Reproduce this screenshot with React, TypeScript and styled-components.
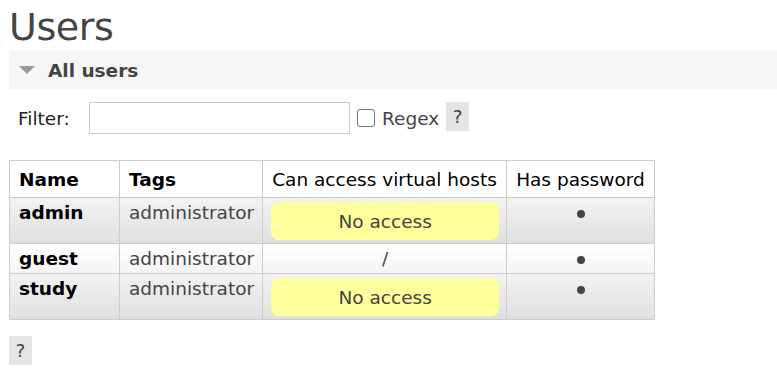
import styled, { createGlobalStyle } from "styled-components";

const GlobalStyle = createGlobalStyle`
  html, body {
    margin: 0;
    padding: 0;
    background: #fff;
    font-family: "DejaVu Sans", Verdana, sans-serif;
    color: #444;
  }
`;

const Page = styled.div`
  padding-left: 9px;
  overflow: hidden;
`;

const Title = styled.h1`
  margin: 0;
  padding-top: 5px;
  font-size: 38px;
  font-weight: normal;
  line-height: 45px;
  color: #444;
  letter-spacing: -0.4px;
`;

const SectionHeader = styled.div`
  display: flex;
  align-items: center;
  height: 38px;
  margin-top: 1px;
  background: #f6f6f6;
  padding-left: 10px;
  gap: 13px;
  font-size: 18.5px;
  font-weight: bold;
  color: #444;
`;

const Triangle = styled.span`
  width: 0;
  height: 0;
  border-left: 8px solid transparent;
  border-right: 8px solid transparent;
  border-top: 8px solid #999;
`;

const FilterRow = styled.div`
  display: flex;
  align-items: center;
  margin-top: 13px;
  padding-left: 9px;
  font-size: 18.5px;
  color: #222;
  height: 32px;
`;

const FilterLabel = styled.span`
  width: 71px;
`;

const FilterInput = styled.input`
  box-sizing: border-box;
  width: 261px;
  height: 32px;
  border: 1px solid #ccc;
  margin: 0;
  outline: none;
`;

const Check = styled.span`
  box-sizing: border-box;
  width: 18px;
  height: 18px;
  border: 1.5px solid #767676;
  border-radius: 3px;
  margin-left: 7px;
  margin-right: 7px;
`;

const RegexLabel = styled.span`
  color: #444;
  margin-right: 7px;
`;

const Help = styled.span`
  display: inline-flex;
  align-items: center;
  justify-content: center;
  width: 23px;
  height: 29px;
  background: #e4e4e4;
  color: #444;
  font-size: 18.5px;
  align-self: flex-start;
`;

const Table = styled.table`
  margin-top: 26px;
  border-collapse: collapse;
  font-size: 18.5px;
  color: #444;
`;

const HeadCell = styled.th<{ $bold?: boolean; $w: number }>`
  box-sizing: border-box;
  width: ${(p) => p.$w}px;
  border: 1px solid #ccc;
  padding: 7px 8px 6px 9px;
  height: 37px;
  text-align: left;
  white-space: nowrap;
  font-weight: ${(p) => (p.$bold ? "bold" : "normal")};
  color: #000;
  background: #fff;
`;

const Row = styled.tr<{ $alt: boolean }>`
  background: ${(p) =>
    p.$alt
      ? "linear-gradient(#f2f2f2, #dfdfdf)"
      : "linear-gradient(#ffffff, #f3f3f3)"};
`;

const Cell = styled.td<{ $center?: boolean; $bold?: boolean }>`
  border: 1px solid #ccc;
  padding: 3px 8px 3px 9px;
  vertical-align: top;
  line-height: 23px;
  white-space: nowrap;
  text-align: ${(p) => (p.$center ? "center" : "left")};
  font-weight: ${(p) => (p.$bold ? "bold" : "normal")};
  color: ${(p) => (p.$bold ? "#000" : "#444")};
`;

const HostCell = styled(Cell)`
  padding: 3px 7px 3px 8px;
`;

const NoAccess = styled.div`
  background: #ffff9b;
  border-radius: 8px;
  text-align: center;
  padding: 8px 0 7px 0;
  margin-top: 1px;
  color: #444;
`;

const Dot = styled.span`
  display: inline-block;
  width: 8px;
  height: 8px;
  border-radius: 50%;
  background: #444;
  vertical-align: middle;
`;

const FooterHelp = styled(Help)`
  margin-top: 16px;
  display: flex;
`;

const users = [
  { name: "admin", tags: "administrator", hosts: null },
  { name: "guest", tags: "administrator", hosts: "/" },
  { name: "study", tags: "administrator", hosts: null },
];

export default function App() {
  return (
    <>
      <GlobalStyle />
      <Page>
        <Title>Users</Title>
        <SectionHeader>
          <Triangle />
          All users
        </SectionHeader>
        <FilterRow>
          <FilterLabel>Filter:</FilterLabel>
          <FilterInput />
          <Check />
          <RegexLabel>Regex</RegexLabel>
          <Help>?</Help>
        </FilterRow>
        <Table>
          <thead>
            <tr>
              <HeadCell $bold $w={110}>Name</HeadCell>
              <HeadCell $bold $w={143}>Tags</HeadCell>
              <HeadCell $w={244}>Can access virtual hosts</HeadCell>
              <HeadCell $w={148}>Has password</HeadCell>
            </tr>
          </thead>
          <tbody>
            {users.map((u) => (
              <Row key={u.name} $alt={u.hosts === null}>
                <Cell $bold>{u.name}</Cell>
                <Cell>{u.tags}</Cell>
                {u.hosts === null ? (
                  <HostCell>
                    <NoAccess>No access</NoAccess>
                  </HostCell>
                ) : (
                  <Cell $center>{u.hosts}</Cell>
                )}
                <Cell $center>
                  <Dot />
                </Cell>
              </Row>
            ))}
          </tbody>
        </Table>
        <FooterHelp>?</FooterHelp>
      </Page>
    </>
  );
}
